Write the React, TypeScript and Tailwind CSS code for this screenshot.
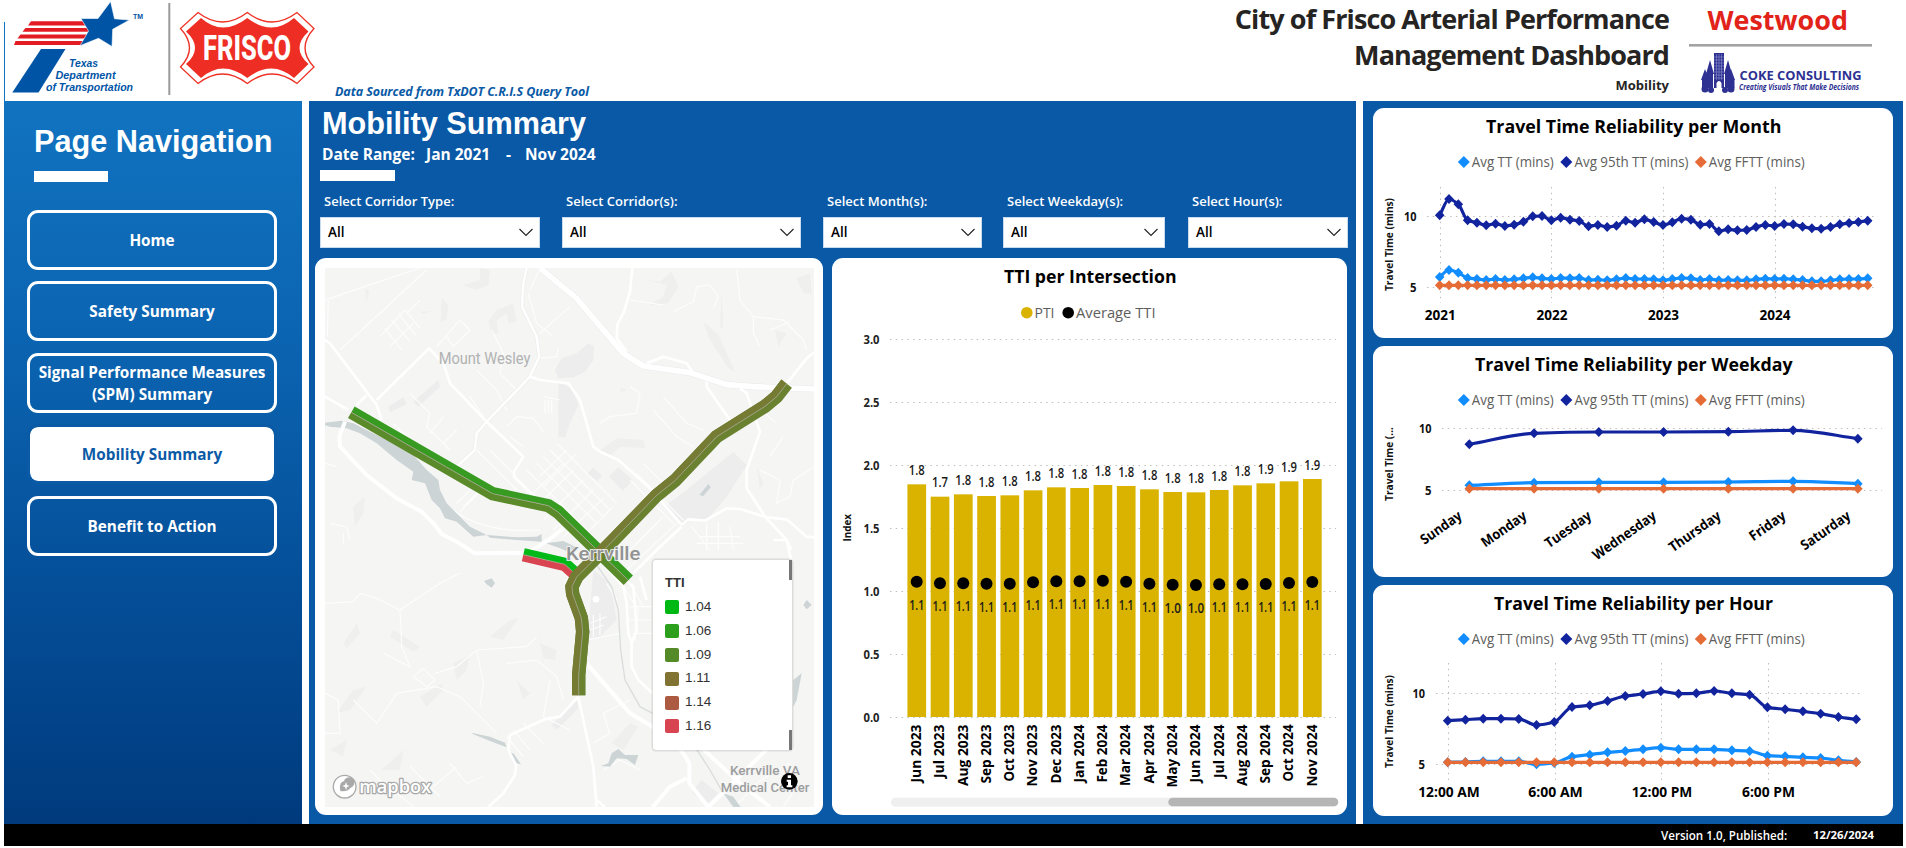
import React from "react";

type Pt = [number, number];

const SANS = "'Open Sans', 'Noto Sans', sans-serif";

/* ---------- helpers ---------- */

function Label({
  x, y, size, children, length, weight = 400, fill = "#111", anchor = "start", rotate, italic, family = SANS,
}: {
  x: number; y: number; size: number; children: string; length?: number; weight?: number; fill?: string;
  anchor?: "start" | "middle" | "end"; rotate?: number; italic?: boolean; family?: string;
}) {
  return (
    <text
      x={x} y={y} fontSize={size} fontWeight={weight} fill={fill} textAnchor={anchor}
      fontStyle={italic ? "italic" : undefined} fontFamily={family} textLength={length}
      lengthAdjust="spacingAndGlyphs" transform={rotate ? `rotate(${rotate} ${x} ${y})` : undefined}
    >
      {children}
    </text>
  );
}

/** Monotone cubic interpolation through the points. */
function curve(p: Pt[]): string {
  const n = p.length;
  const s: number[] = [];
  for (let i = 0; i < n - 1; i++) s.push((p[i + 1][1] - p[i][1]) / (p[i + 1][0] - p[i][0]));
  const m = p.map((_, i) => {
    if (i === 0) return s[0];
    if (i === n - 1) return s[n - 2];
    return s[i - 1] * s[i] <= 0 ? 0 : (2 * s[i - 1] * s[i]) / (s[i - 1] + s[i]);
  });
  let d = `M${p[0][0]},${p[0][1]}`;
  for (let i = 0; i < n - 1; i++) {
    const h = (p[i + 1][0] - p[i][0]) / 3;
    d += `C${p[i][0] + h},${p[i][1] + m[i] * h} ${p[i + 1][0] - h},${p[i + 1][1] - m[i + 1] * h} ${p[i + 1][0]},${p[i + 1][1]}`;
  }
  return d;
}

/** Parallel polyline at distance d. */
function offset(p: Pt[], d: number): string {
  return p
    .map((c, i) => {
      const a = p[Math.max(0, i - 1)];
      const b = p[Math.min(p.length - 1, i + 1)];
      const n1 = unit(a, c);
      const n2 = unit(c, b);
      const u = i === 0 ? n2 : n1;
      const v = i === p.length - 1 ? n1 : n2;
      const sx = u[0] + v[0];
      const sy = u[1] + v[1];
      const k = (2 * d) / (sx * sx + sy * sy);
      return `${c[0] + sx * k},${c[1] + sy * k}`;
    })
    .join(" ");
}
function unit(a: Pt, b: Pt): Pt {
  const dx = b[0] - a[0];
  const dy = b[1] - a[1];
  const l = Math.hypot(dx, dy) || 1;
  return [dy / l, -dx / l];
}

function Chevron() {
  return (
    <svg width="14" height="9" viewBox="0 0 14 9" fill="none" stroke="#222" strokeWidth="1.1">
      <path d="M0.5 1 L7 7.5 L13.5 1" />
    </svg>
  );
}

/* ---------- header ---------- */

function shield(i: number) {
  const l = 180.5 + i, r = 314 - i, t = 12.5 + i, b = 83.5 - i;
  const c = i * 0.55;
  return `M${198 + c},${t} Q${222.5},${t + 19} 247.3,${t} Q${272},${t + 19} ${297 - c},${t} L${r},${28.5 + c} Q${r - 18},48 ${r},${67 - c} L${297 - c},${b} Q272,${b - 19} 247.3,${b} Q222.5,${b - 19} ${198 + c},${b} L${l},${67 - c} Q${l + 18},48 ${l},${28.5 + c}Z`;
}

function LeftLogos() {
  return (
    <svg width="330" height="101" viewBox="0 0 330 101">
      <rect x="4" y="22" width="1" height="79" fill="#1173c0" />
      <g fill="#e31b23">
        <path d="M31 21.3H84L87 25.6H28Z" />
        <path d="M25.5 28H90L88.500 31.800H22.500Z" />
        <path d="M20.500 34.500H88L86 38.500H17.500Z" />
        <path d="M15.500 41H84L82 45H14Z" />
      </g>
      <path fill="#0054a6" stroke="#fff" strokeWidth="0.6" d="M110.600 1.500 L114.500 18.800 L129.500 20 L112.700 29.300 L112 46.500 L98.500 38.300 L80 45.700 L88.500 31 L81 18.500 L98 18.500Z" />
      <path fill="#0054a6" d="M41 49H65.500L38.500 92.500H12.300Z" />
      <Label x={133} y={19} size={7} length={10} weight={700} fill="#0054a6" family="Liberation Sans">TM</Label>
      <g>
        <Label x={69} y={67} size={11.500} length={29} weight={700} italic fill="#0054a6" family="Liberation Sans">Texas</Label>
        <Label x={55.500} y={78.500} size={11.500} length={60} weight={700} italic fill="#0054a6" family="Liberation Sans">Department</Label>
        <Label x={46} y={90.700} size={11.500} length={87} weight={700} italic fill="#0054a6" family="Liberation Sans">of Transportation</Label>
      </g>
      <rect x="168.300" y="3" width="2" height="92" fill="#9a9a9a" />
      <path d={shield(0)} fill="#fff" stroke="#ee3124" strokeWidth="1.300" />
      <path d={shield(5.500)} fill="#ee2e24" />
      <Label x={203} y={60} size={34.500} length={88} weight={800} fill="#fff" family="Roboto">FRISCO</Label>
    </svg>
  );
}

function RightLogos() {
  return (
    <svg width="217" height="101" viewBox="1689 0 217 101">
      <Label x={1707.500} y={30} size={27.500} length={140.500} weight={700} fill="#e2231a">Westwood</Label>
      <rect x="1689" y="44" width="183" height="2.600" fill="#a3a3a3" />
      <g fill="#2e3192">
        <rect x="1714" y="53" width="10" height="35" />
        <path d="M1710 60L1714 74H1706Z M1728 60L1732 74H1724Z M1705 69L1709 80H1701Z M1731 69L1735 80H1727.500Z" />
        <path d="M1707 73H1713V88H1707Z M1725 73H1731V88H1725Z M1702 79H1708V88H1702Z M1729 79H1734.500V88H1729Z" />
        <circle cx="1705" cy="89" r="3.500" /><circle cx="1711" cy="90" r="3" />
        <circle cx="1725" cy="90" r="3" /><circle cx="1731" cy="89" r="3.500" />
      </g>
      <g stroke="#9ea1d4" strokeWidth="0.500">
        <path d="M1716.500 54V80M1719 54V80M1721.500 54V80M1714 57H1724M1714 60H1724M1714 63H1724M1714 66H1724M1714 69H1724M1714 72H1724M1714 75H1724M1714 78H1724" />
      </g>
      <path d="M1716.500 90V83Q1719 79 1721.500 83V90Z" fill="#fff" />
      <Label x={1739.500} y={79.500} size={13} length={122} weight={700} fill="#2e3192">COKE CONSULTING</Label>
      <Label x={1739} y={90} size={8.500} length={120} weight={700} italic fill="#2e3192">Creating Visuals That Make Decisions</Label>
    </svg>
  );
}

/* ---------- map ---------- */

const NW: Pt[] = [[124, 487], [548, 731], [715, 767], [744, 786], [955, 991]];
const NE: Pt[] = [[1430, 401], [1400, 440], [1365, 469], [1220, 560], [1095, 692], [1040, 736], [905, 876], [800, 981], [786, 1010], [788, 1032], [814, 1104], [818, 1145], [806, 1275], [806, 1336]];
const SHORT: Pt[] = [[640, 914], [764, 943], [805, 980]];

function Corridor({ path, a, b }: { path: Pt[]; a: string; b: string }) {
  return (
    <g fill="none" strokeLinejoin="miter">
      <polyline points={offset(path, 10)} stroke={a} strokeWidth="20" />
      <polyline points={offset(path, -10)} stroke={b} strokeWidth="20" />
      <polyline points={offset(path, 0)} stroke="#a3a58f" strokeWidth="2.500" />
    </g>
  );
}

function RoadMap() {
  return (
    <svg width="489" height="539" viewBox="45 54 1467 1617" className="block bg-[#f5f5f4]">
      {/* parkland */}
      <g fill="#ecedec">
        <path d="M735 360L755 325L800 310L835 280L852 290L850 330L825 365L790 382L745 385Z" />
        <path d="M745 395L785 415L805 465L780 520L765 562L745 560Z" />
        <path d="M897 680L925 652L968 690L938 722Z M832 670L850 653L876 677L862 692Z" />
        <path d="M1070 765L1130 720L1240 630L1270 607L1310 645L1250 740L1195 805L1140 812L1120 825Z" />
        <path d="M850 960L900 1000L920 1110L870 1160L835 1165L840 1080Z" />
        <path d="M235 470L280 442L290 462L240 487Z M310 455L385 390L390 410L325 470Z" />
        <path d="M725 1425L800 1350L805 1375L740 1440Z M1145 1625L1175 1590L1225 1630L1190 1665Z" />
      </g>
      {/* relief */}
      <g fill="#efefee">
        <path d="M535 215L560 180L610 160L620 215L595 220L590 190L560 210L565 250L545 250Z M395 145L415 165L410 210L392 215Z" />
        <path d="M1008 90L1050 95L1085 65L1105 110L1075 160L1020 165L1060 140L1070 105Z M1180 215L1225 255L1275 365L1255 355L1200 270Z" />
        <path d="M510 55L540 60L535 105L500 120L460 105L510 90Z M1235 130L1240 230L1230 235Z" />
        <path d="M870 600L920 565L1000 570L1005 595L930 590L900 615Z M930 415L950 418L935 428Z" />
        <path d="M100 1180L140 1120L150 1150L110 1195Z M250 1140L330 1190L310 1205L240 1160Z M540 1160L600 1110L625 1105L580 1170Z" />
        <path d="M130 770L165 740L160 790L135 830Z M80 1390L130 1320L170 1310L120 1380Z M330 1340L395 1300L400 1320L350 1370Z" />
        <path d="M690 1180L740 1200L735 1230L700 1225Z M430 1240L480 1215L470 1260L440 1290Z M905 1480L960 1420L985 1430L940 1500Z" />
        <path d="M1460 85L1500 70L1505 130L1480 130Z M1395 240L1430 250L1405 290Z M165 115L178 125L170 155Z M330 185L365 182L340 192Z" />
        <path d="M60 1500L110 1470L100 1520Z M215 1560L280 1500L270 1560Z M620 1290L660 1330L640 1350Z M1340 650L1360 700L1350 720Z" />
      </g>
      {/* minor streets */}
      <g fill="none" stroke="#fdfdfd" strokeWidth="3.500">
        <path d="M45 150L60 145L330 54M55 150L52 260M90 300L350 60M210 260L285 180L330 235M240 290L310 220M225 235L275 300M245 210L300 275M265 190L320 260M330 150L290 190M380 290L450 210L480 240L430 290L410 260" />
        <path d="M660 120L690 54M655 130L680 220L730 260M690 250L780 170M690 325L740 320L745 295M960 150L1060 165M1090 185L1150 155L1160 110L1200 105L1225 140L1210 175M1280 60L1290 150L1330 200L1420 210L1480 270L1490 300M1330 200V250L1350 290M1380 240L1440 215" />
        <path d="M590 530L620 500L670 505L700 545M600 560L640 590M480 440L520 500M500 360L560 420L590 480M545 240L580 310L570 370L620 420M700 440L750 450M705 450V490M715 450V490M725 450V490" />
        <path d="M300 430L360 490L350 530L420 600M250 520L320 590M400 500L360 550M440 540L400 580M500 600L560 660L620 720M540 600L620 680" />
        <path d="M680 640L860 820M700 620L880 800M720 600L900 780M740 580L920 760M650 660L830 840M760 640L640 760M790 660L670 780M820 690L700 810M850 720L730 840M880 745L760 860M910 770L800 880M770 600L690 680M800 610L700 710" />
        <path d="M1000 640L1060 700M960 690L1090 820M980 670L1120 810M1100 820L950 960M1060 800L920 940M1030 770L900 900M1145 830L1200 900M1190 820V900M1225 815V900M1260 830L1270 900M1170 860H1290M1160 880H1300" />
        <path d="M870 520L900 500L980 490L990 430L960 410M1030 480L1100 560L1150 590M1060 440L1130 520L1180 540M1340 470L1400 520M1420 560L1380 620M1350 660L1410 690L1400 760L1440 740L1450 690L1512 650" />
        <path d="M45 1060L130 1055L150 1030L200 1045L270 1080L390 1000L450 970M270 1080L275 1190L300 1250L220 1210M310 1280L340 1255L375 1290L350 1310Z M375 1270L440 1250L500 1200L650 1190L680 1160" />
        <path d="M45 1330L85 1350L90 1450H45M130 1350L200 1420L260 1330L380 1310L450 1340L560 1450M500 1200L520 1300L510 1370M590 1240L680 1230L740 1280L760 1350M640 1420L700 1480M610 1440L660 1500M590 1460L640 1520M720 1290L700 1400L780 1440M850 1480L900 1450L880 1390L960 1350" />
        <path d="M180 1560L210 1590L310 1670M300 1550L390 1640M420 1540L470 1600L520 1580M370 1610L440 1550M840 1120L890 1100M840 1140L880 1125M850 1095V1160M870 1090V1155M890 1000L920 1050M830 1170L930 1150" />
        <path d="M940 1010L985 1080L975 1170M960 1000L1000 1070M960 1070H1028M960 1110H1028M970 1150H1028M1280 1665L1340 1600L1400 1560L1440 1540M1420 1670L1460 1610M880 1560L930 1530L990 1560" />
        <path d="M440 760L500 700L520 715L450 785M460 770L510 720M430 780Q520 850 690 840M45 640L80 650M60 820L110 830L120 870M100 850V880" />
      </g>
      {/* water */}
      <g fill="#cdd4d6">
        <path d="M45 518L95 512L130 520L180 545L250 580L310 615L350 660L385 690L390 720L410 760L430 780L480 830L530 855L490 860L440 815L405 805L390 775L365 750L345 700L305 690L310 665L260 630L200 580L150 550L110 535L60 530L45 526Z" />
        <path d="M530 855L620 862L680 860L695 852V875L620 870L540 863Z M708 880L760 873L805 895L790 912L750 895Z" />
        <path d="M485 1448L540 1460L585 1478L590 1492L540 1473L490 1453Z M590 1500L612 1512L633 1543L620 1540L600 1512Z" />
        <path d="M522 993L545 985L555 1000L545 1013L530 1003Z M872 1548L895 1540L905 1510L925 1497L945 1515L985 1515L975 1545L950 1527L920 1525L900 1550Z" />
        <path d="M1168 735L1195 702L1202 712L1180 738Z M1240 1630L1270 1640L1292 1671L1270 1671Z M1450 1290L1475 1270L1460 1350L1450 1370Z M1480 1065L1490 1050L1505 1065L1490 1078Z" />
      </g>
      <path d="M860 945L905 1010L925 1080L932 1200L945 1290L990 1370L1028 1390M1160 1498L1200 1560L1240 1630" fill="none" stroke="#dadddd" strokeWidth="4" />
      {/* main roads */}
      <g fill="none" stroke="#e9eaea" strokeLinejoin="round">
        <path strokeWidth="11" d="M650 54L640 100L636 170L680 260L688 320L660 380L530 515L500 550L495 600L440 650" />
        <path strokeWidth="20" d="M690 54L800 145L940 310L1000 348L1140 368L1250 404L1330 410L1512 417" />
      </g>
      <g fill="none" stroke="#fff" strokeLinejoin="round">
        <path strokeWidth="17" d="M690 54L800 145L940 310L1000 348L1140 368L1250 404L1330 410L1512 417" />
        <g strokeWidth="8">
          <path d="M650 54L640 100L636 170L680 260L688 320L660 380L530 515L500 550L495 600L440 650" />
          <path d="M967 54L960 125L942 185L922 225L920 265L950 305M1010 340L1060 320L1130 340L1150 370M1190 395V410L1260 510M1290 415L1310 430L1350 545L1310 660V715L1365 800L1430 870L1445 900" />
          <path d="M45 270L60 280L200 465L215 510M45 440L115 480M200 450L357 295L400 340L420 400L530 515L640 620L612 665V680L690 755M140 465L170 435" />
          <path d="M660 380L690 390L775 400L810 450L850 590L870 605L925 630L1020 715L1115 825M1115 825L1135 808L1185 812L1250 775L1290 777L1370 802L1430 808L1490 860L1512 862M1430 400L1490 325L1512 308M1115 830L1040 900L970 970" />
        </g>
        <g strokeWidth="12">
          <path d="M105 515L88 560L90 590L170 675L260 745L335 785L375 825L395 852L440 875L495 910L640 908M660 905L715 870L760 835" />
          <path d="M830 1240L960 1390L1028 1430L1110 1495L1138 1540V1600L1195 1671L1370 1498M1028 1671L1080 1610L1130 1585M1180 1498L1290 1600L1380 1671" />
        </g>
        <g strokeWidth="8">
          <path d="M870 930L940 1010L950 1060L955 1150L965 1180V1250L985 1290L1028 1330M950 990L970 1010L980 1140L965 1180M990 980L1010 1050M1390 870H1430L1443 930" />
          <path d="M805 1340L750 1400L705 1408L600 1455L595 1500L618 1545L615 1575L580 1630L535 1671M805 1340L850 1550L860 1671M860 1650L885 1671" />
        </g>
      </g>
      <circle cx="858" cy="1048" r="10" fill="#fff" />
      {/* measured corridors */}
      <Corridor path={SHORT} a="#02b917" b="#d84450" />
      <Corridor path={NW} a="#389b21" b="#5a8a29" />
      <g fill="none">
        <polyline points={offset(NE, -10)} stroke="#6a8230" strokeWidth="20" />
        <polyline points={offset(NE, 10)} stroke="#6a8230" strokeWidth="20" />
        <polyline points={offset(NE.slice(0, 8), -10)} stroke="#757b33" strokeWidth="20" />
        <polyline points={offset(NE.slice(7), 10)} stroke="#6a8230" strokeWidth="20" />
        <polyline points={offset(NE.slice(7), -10)} stroke="#757b33" strokeWidth="20" />
        <polyline points={offset(NE, 0)} stroke="#a3a58f" strokeWidth="2.500" />
      </g>
      {/* place names */}
      <g fontFamily="Roboto" stroke="#f5f5f4" strokeWidth="5" paintOrder="stroke" fill="#b1b2b2">
        <text x="386" y="343" fontSize="47" textLength="275" lengthAdjust="spacingAndGlyphs">Mount Wesley</text>
        <text x="768" y="930" fontSize="54" textLength="223" lengthAdjust="spacingAndGlyphs" fill="#929393" fontWeight="500">Kerrville</text>
        <g fontSize="39" fill="#9c9d9e" fontWeight="500">
          <text x="1260" y="1575" textLength="210" lengthAdjust="spacingAndGlyphs">Kerrville VA</text>
          <text x="1232" y="1626" textLength="266" lengthAdjust="spacingAndGlyphs">Medical Center</text>
        </g>
      </g>
      {/* map provider mark */}
      <g>
        <circle cx="104" cy="1610" r="34" fill="#fff" stroke="#a9a9a9" strokeWidth="4" />
        <path d="M91 1623Q85 1598 102 1593A16 16 0 1 1 122 1613Q112 1626 91 1623Z" fill="#a9a9a9" />
        <path d="M108 1596L111 1605L119 1608L111 1611L108 1620L105 1611L97 1608L105 1605Z" fill="#fff" />
        <text x="148" y="1628" fontFamily="'Open Sans'" fontWeight="600" fontSize="56" textLength="216" lengthAdjust="spacingAndGlyphs" fill="#fff" stroke="#a9a9a9" strokeWidth="8" paintOrder="stroke" strokeLinejoin="round">mapbox</text>
      </g>
      <circle cx="1438" cy="1594" r="25" fill="#000" />
      <path d="M1433 1576H1443V1584H1433Z M1430 1589H1443V1606H1447V1612H1430V1606H1434V1595H1430Z" fill="#fff" />
    </svg>
  );
}

const TTI_CLASSES = [
  ["1.04", "bg-[#00b813]"], ["1.06", "bg-[#2ca01c]"], ["1.09", "bg-[#548b28]"],
  ["1.11", "bg-[#807334]"], ["1.14", "bg-[#ac5b42]"], ["1.16", "bg-[#d84450]"],
];

function MapCard() {
  return (
    <section className="h-[557px] w-[508px] rounded-[11px] bg-white pl-[10px] pt-[10px]">
      <div className="relative h-[539px] w-[489px]">
        <RoadMap />
        <div className="absolute left-[328px] top-[292px] flex h-[190px] w-[139px] flex-col rounded-[3px] bg-white pl-3 pt-[14px] font-['Liberation_Sans'] text-[#333] shadow-[0_0_0_1.5px_rgba(0,0,0,0.1)]">
          <div className="mb-[3px] text-[13px] font-bold leading-[18px]">TTI</div>
          {TTI_CLASSES.map(([v, c]) => (
            <div key={v} className="flex h-[23.9px] shrink-0 items-center gap-[6px] text-[13.500px]">
              <span className={`h-[14px] w-[14px] rounded-[2px] ${c}`} />
              {v}
            </div>
          ))}
          <span className="absolute right-0 top-0 h-5 w-[3px] bg-[#777]" />
          <span className="absolute bottom-0 right-0 h-5 w-[3px] bg-[#777]" />
        </div>
      </div>
    </section>
  );
}

/* ---------- TTI bar chart ---------- */

const BARS: [string, number, number, string, string, number][] = [
  ["Jun 2023", 493, 35, "1.8", "1.1", 58], ["Jul 2023", 530, 40, "1.7", "1.1", 53.5], ["Aug 2023", 523, 40, "1.8", "1.1", 61.5],
  ["Sep 2023", 528, 41, "1.8", "1.1", 59], ["Oct 2023", 526, 41, "1.8", "1.1", 57], ["Nov 2023", 511, 37, "1.8", "1.1", 62],
  ["Dec 2023", 502, 34, "1.8", "1.1", 59], ["Jan 2024", 504, 34, "1.8", "1.1", 58], ["Feb 2024", 495, 32, "1.8", "1.1", 58],
  ["Mar 2024", 498, 35, "1.8", "1.1", 61.500], ["Apr 2024", 508, 41, "1.8", "1.1", 59], ["May 2024", 516, 44, "1.8", "1.0", 63],
  ["Jun 2024", 517, 45, "1.8", "1.0", 58], ["Jul 2024", 510, 43, "1.8", "1.1", 53.5], ["Aug 2024", 496, 43, "1.8", "1.1", 61.500],
  ["Sep 2024", 490, 42, "1.9", "1.1", 59], ["Oct 2024", 484, 39, "1.9", "1.1", 57], ["Nov 2024", 477, 36, "1.9", "1.1", 62],
];

function BarCard() {
  return (
    <section className="h-[557px] w-[515px] rounded-[11px] bg-white">
      <svg width="515" height="557" viewBox="832 258 515 557" className="block">
        <Label x={1004} y={283} size={17.500} length={172.500} weight={700} fill="#000">TTI per Intersection</Label>
        <circle cx="1026.800" cy="312.700" r="5.800" fill="#d9b300" />
        <Label x={1034.500} y={318} size={14.500} length={20} fill="#605e5c">PTI</Label>
        <circle cx="1068.200" cy="312.700" r="5.800" fill="#000" />
        <Label x={1076} y={318} size={14.500} length={79.500} fill="#605e5c">Average TTI</Label>
        {["3.0", "2.5", "2.0", "1.5", "1.0", "0.5", "0.0"].map((t, i) => (
          <g key={t}>
            <line x1="890" x2="1336" y1={339.500 + i * 63} y2={339.500 + i * 63} stroke="#c0bebc" strokeDasharray="1.500 4.280" />
            <Label x={879.500} y={343.500 + i * 63} size={11.800} length={16} weight={700} fill="#222" anchor="end">{t}</Label>
          </g>
        ))}
        <Label x={850.500} y={541.500} size={11} length={27.500} weight={700} rotate={-90}>Index</Label>
        {BARS.map(([m, top, dot, a, b, len], i) => {
          const x = 916.700 + i * 23.270;
          const y = 320.300 + top / 3;
          const dy = 570 + dot / 3;
          return (
            <g key={m}>
              <rect x={x - 9.300} y={y - 0.300} width="18.700" height={717.300 - y} fill="#d9b300" />
              <circle cx={x} cy={dy} r="6" fill="#000" />
              <Label x={x} y={y - 9.800} size={14} length={16} anchor="middle" weight={600} fill="#1a1a1a">{a}</Label>
              <Label x={x} y={dy + 28} size={14} length={b === "1.0" ? 16.500 : 15} anchor="middle" weight={600} fill="#1a1a1a">{b}</Label>
              <Label x={x + 4.300} y={724.500} size={13.500} length={len} anchor="end" weight={700} fill="#000" rotate={-90}>{m}</Label>
            </g>
          );
        })}
        <rect x="891" y="797.700" width="447" height="9" rx="4.500" fill="#f0efef" />
        <rect x="1168.300" y="797.700" width="170" height="8.500" rx="4.250" fill="#b5b5b5" />
      </svg>
    </section>
  );
}

/* ---------- line charts ---------- */

const LIGHT = "#118dff";
const NAVY = "#12239e";
const ORANGE = "#e66c37";

function Series({ pts, color }: { pts: Pt[]; color: string }) {
  return (
    <g>
      <path d={curve(pts)} fill="none" stroke={color} strokeWidth="3.200" strokeLinejoin="round" strokeLinecap="round" />
      <path fill={color} d={pts.map(([x, y]) => `M${x},${y - 5}l4.800,5l-4.800,5l-4.800,-5Z`).join("")} />
    </g>
  );
}

function LineCard({
  title, tx, tl, top, height, grid, x0, dx, values, left, right, labelX, children,
}: {
  title: string; tx: number; tl: number; top: number; height: number; grid: [number, number]; x0: number; dx: number;
  values: [number[], number[], number]; left: number; right: number; labelX: number; children: React.ReactNode;
}) {
  const at = (v: number[]): Pt[] => v.map((y, i) => [x0 + i * dx, y]);
  const ly = top + 54;
  return (
    <section className="w-[520px] rounded-[11px] bg-white">
      <svg width="520" height={height} viewBox={`1373 ${top} 520 ${height}`} className="block">
        <Label x={tx} y={top + 24.700} size={17.500} length={tl} weight={700} fill="#000">{title}</Label>
        {([[1463.800, LIGHT, "Avg TT (mins)", 1471.800, 82], [1566.300, NAVY, "Avg 95th TT (mins)", 1574.500, 114], [1700.800, ORANGE, "Avg FFTT (mins)", 1708.800, 96]] as [number, string, string, number, number][]).map(
          ([cx, c, t, x, l]) => (
            <g key={t}>
              <path d={`M${cx},${ly - 6}l6,6l-6,6l-6,-6Z`} fill={c} />
              <Label x={x} y={ly + 5} size={13.800} length={l} fill="#605e5c">{t}</Label>
            </g>
          ),
        )}
        {grid.map((g, i) => (
          <g key={g}>
            <line x1={left} x2={right} y1={g} y2={g} stroke="#c0bebc" strokeDasharray="1.500 4.280" />
            <Label x={labelX} y={g + 4.500} size={12.500} length={i ? 6.500 : 12.500} anchor="end" weight={700} fill="#111">{i ? "5" : "10"}</Label>
          </g>
        ))}
        {children}
        <Series pts={at(values[0])} color={NAVY} />
        <Series pts={at(values[1])} color={LIGHT} />
        <Series pts={at(values[0].map(() => values[2]))} color={ORANGE} />
      </svg>
    </section>
  );
}

const scale = (base: number, v: number[]) => v.map((y) => base + y / 3);

const MONTH_95 = scale(100, [346, 297, 313, 361, 368, 376, 371, 378, 374, 365, 349, 348, 361, 353, 359, 363, 379, 375, 381, 377, 362, 368, 358, 366, 375, 367, 356, 359, 374, 372, 394, 388, 391, 390, 381, 375, 378, 372, 373, 380, 385, 386, 381, 373, 369, 366, 362]);
const MONTH_TT = scale(100, [531, 510, 518, 534, 537, 540, 537, 540, 538, 535, 532, 535, 537, 534, 535, 534, 540, 539, 541, 538, 534, 537, 537, 538, 541, 537, 534, 535, 540, 537, 541, 540, 541, 541, 538, 536, 537, 536, 538, 540, 544, 544, 541, 538, 537, 537, 535]);
const DAY_95 = scale(340, [313, 280, 276, 276, 275, 271, 296]);
const DAY_TT = scale(340, [436, 428, 427, 427, 426, 424, 431]);
const HOUR_95 = scale(580, [422, 419, 416, 416, 417, 435, 426, 381, 376, 363, 348, 342, 334, 341, 340, 333, 340, 344, 382, 388, 394, 401, 411, 418]);
const HOUR_TT = scale(580, [547, 546, 544, 544, 544, 553, 549, 530, 524, 517, 513, 508, 503, 508, 508, 508, 511, 513, 527, 529, 532, 534, 541, 546]);
const DAYS: [string, number][] = [["Sunday", 47], ["Monday", 52], ["Tuesday", 53], ["Wednesday", 74], ["Thursday", 60], ["Friday", 41], ["Saturday", 57]];

function VGrid({ xs, y1, y2 }: { xs: number[]; y1: number; y2: number }) {
  return <g stroke="#c0bebc" strokeDasharray="1.500 4.280">{xs.map((x) => <line key={x} x1={x} x2={x} y1={y1} y2={y2} />)}</g>;
}

function RightPanel() {
  return (
    <aside className="ml-[7px] flex w-[540px] flex-col gap-[8.5px] bg-[#0959a6] pl-[10px] pt-[6.5px]">
      <LineCard title="Travel Time Reliability per Month" tx={1486} tl={295.500} top={108} height={230} grid={[216.500, 287.500]} x0={1439.700} dx={9.304} values={[MONTH_95, MONTH_TT, 285.300]} left={1427} right={1878} labelX={1416.500}>
        <VGrid xs={[1440.500, 1551.500, 1663.500, 1775.500]} y1={187} y2={303} />
        <Label x={1392.500} y={291} size={11} length={93} weight={700} rotate={-90}>Travel Time (mins)</Label>
        {["2021", "2022", "2023", "2024"].map((t, i) => (
          <Label key={t} x={1440.300 + i * 111.600} y={319.700} size={14} length={31} weight={700} fill="#000" anchor="middle">{t}</Label>
        ))}
      </LineCard>
      <LineCard title="Travel Time Reliability per Weekday" tx={1475} tl={317.500} top={346} height={230.500} grid={[428.500, 490.500]} x0={1469.300} dx={64.760} values={[DAY_95, DAY_TT, 488.700]} left={1442} right={1882} labelX={1431.500}>
        <Label x={1392.500} y={501} size={11} length={74} weight={700} rotate={-90}>Travel Time (...</Label>
        {DAYS.map(([t, l], i) => (
          <Label key={t} x={1463 + i * 64.760} y={518} size={14} length={l} weight={700} fill="#000" anchor="end" rotate={-35}>{t}</Label>
        ))}
      </LineCard>
      <LineCard title="Travel Time Reliability per Hour" tx={1494} tl={279} top={585} height={230.500} grid={[693.500, 764.500]} x0={1447.700} dx={17.760} values={[HOUR_95, HOUR_TT, 762.300]} left={1436} right={1863} labelX={1425}>
        <VGrid xs={[1448.500, 1555.500, 1661.500, 1768.500]} y1={663} y2={780} />
        <Label x={1392.500} y={768} size={11} length={93} weight={700} rotate={-90}>Travel Time (mins)</Label>
        {([["12:00 AM", 61.500], ["6:00 AM", 54.500], ["12:00 PM", 60.500], ["6:00 PM", 53]] as [string, number][]).map(([t, l], i) => (
          <Label key={t} x={1449 + i * 106.500} y={797} size={14} length={l} weight={700} fill="#000" anchor="middle">{t}</Label>
        ))}
      </LineCard>
    </aside>
  );
}

/* ---------- page ---------- */

const NAV = ["Home", "Safety Summary", "Signal Performance Measures (SPM) Summary", "Mobility Summary", "Benefit to Action"];

const FILTERS: [string, string][] = [
  ["Select Corridor Type:", "w-[220px]"], ["Select Corridor(s):", "ml-[22px] w-[239px]"], ["Select Month(s):", "ml-[22px] w-[159px]"],
  ["Select Weekday(s):", "ml-[21px] w-[162px]"], ["Select Hour(s):", "ml-[23px] w-[160px]"],
];

export default function App() {
  return (
    <div className="flex h-[848px] w-[1906px] flex-col overflow-hidden bg-white font-['Open_Sans','Noto_Sans',sans-serif]">
      <header className="flex h-[101px] shrink-0">
        <LeftLogos />
        <div className="ml-[5px] mt-[83px] whitespace-nowrap text-[12.500px] font-bold italic leading-[18px] tracking-[-0.1px] text-[#0a5aa6]">
          Data Sourced from TxDOT C.R.I.S Query Tool
        </div>
        <div className="ml-auto mr-[20px] pt-[1px] text-right text-[#252423]">
          <h1 className="w-[470px] text-[27px] font-bold leading-[36px] tracking-[-0.9px]">
            City of Frisco Arterial Performance Management Dashboard
          </h1>
          <div className="mt-[2px] text-[13px] font-bold leading-[20px]">Mobility</div>
        </div>
        <RightLogos />
      </header>

      <div className="flex h-[723px] shrink-0 pl-1">
        <nav className="w-[298px] bg-[linear-gradient(180deg,#1173c0_0%,#0b63b0_35%,#05509a_65%,#003a7d_100%)] pl-[23px] pt-[20px]">
          <h2 className="ml-[7px] whitespace-nowrap font-['Liberation_Sans'] text-[30.670px] font-bold leading-[40px] text-white">Page Navigation</h2>
          <div className="ml-[7px] mt-[10px] h-[10.500px] w-[74px] bg-white" />
          <ul className="mt-[28.500px] flex flex-col gap-[11.400px]">
            {NAV.map((n) => (
              <li
                key={n}
                className={
                  n === "Mobility Summary"
                    ? "flex h-[60px] w-[250px] items-center justify-center rounded-[11px] border-[3px] border-[#0b5aa6] bg-white bg-clip-padding text-center text-[15.300px] font-bold leading-[22px] text-[#0b5aa6]"
                    : "flex h-[60px] w-[250px] items-center justify-center rounded-[11px] border-[3px] border-white text-center text-[15.300px] font-bold leading-[22px] text-white"
                }
              >
                {n}
              </li>
            ))}
          </ul>
        </nav>

        <main className="ml-[7px] w-[1047px] bg-[#0959a6] pl-[6px]">
          <div className="h-[81px] pl-[5px] text-white">
            <h2 className="pl-[2px] pt-[2px] font-['Liberation_Sans'] text-[30.670px] font-bold leading-[40px]">Mobility Summary</h2>
            <div className="flex pl-[2px] text-[15.500px] font-bold leading-[22px]">
              <span className="w-[104px]">Date Range:</span>
              <span className="w-[80px]">Jan 2021</span>
              <span className="w-[19px]">-</span>
              <span>Nov 2024</span>
            </div>
            <div className="mt-[5px] h-[10.500px] w-[74.500px] bg-white" />
          </div>
          <div className="mt-[9px] flex pl-[5px]">
            {FILTERS.map(([label, cls]) => (
              <div key={label} className={cls}>
                <div className="pl-1 text-[13px] font-semibold leading-[20px] text-white">{label}</div>
                <div className="mt-[6px] flex h-[30.500px] items-center justify-between border border-[#c9dcef] bg-white pl-[7px] pr-[6px] text-[13.500px] font-semibold text-black">
                  All
                  <Chevron />
                </div>
              </div>
            ))}
          </div>
          <div className="mt-[10.500px] flex gap-[9px]">
            <MapCard />
            <BarCard />
          </div>
        </main>

        <RightPanel />
      </div>

      <footer className="ml-1 flex h-[22px] w-[1899px] shrink-0 justify-end bg-black text-[11.600px] font-semibold leading-[24px] text-white">
        <span className="w-[152px]">Version 1.0, Published:</span>
        <span className="w-[90px] text-[11.300px] font-bold leading-[22px]">12/26/2024</span>
      </footer>
    </div>
  );
}
